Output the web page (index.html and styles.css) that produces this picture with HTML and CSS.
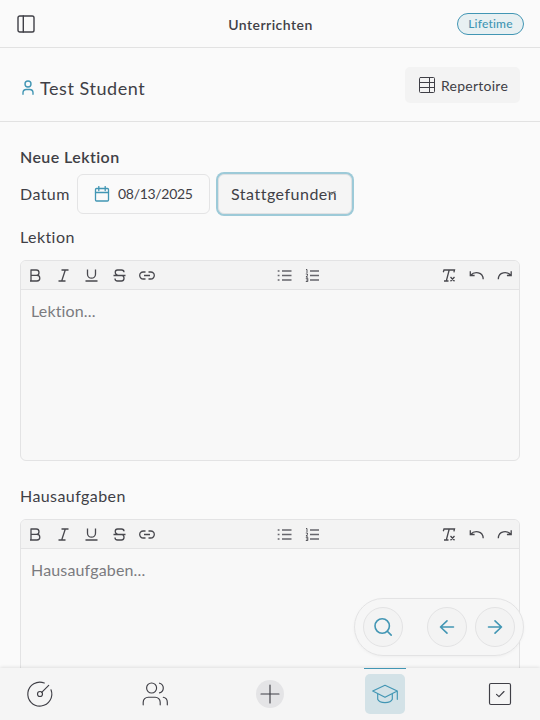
FILE: index.html
```
<!DOCTYPE html>
<html lang="de">
<head>
<meta charset="utf-8">
<title>Unterrichten</title>
<link rel="stylesheet" href="styles.css">
</head>
<body>
<svg class="sprite" aria-hidden="true">
  <symbol id="bold" viewBox="0 0 15 15"><path d="M3 2v11h6a2.8 2.8 0 0 0 0-5.6H3h5.3a2.6 2.6 0 0 0 0-5.4H2.5M2 13h2"/></symbol>
  <symbol id="italic" viewBox="0 0 15 15"><path d="M5.5 2h7M2.5 13h7M9.3 2 5.7 13"/></symbol>
  <symbol id="underline" viewBox="0 0 15 15"><path d="M3.5 1.5v4.7a4 4 0 0 0 8 0V1.5M1.5 13h12"/></symbol>
  <symbol id="strike" viewBox="0 0 15 15"><path d="M12 4.2C12 2.8 11 2 9.5 2h-4C2.5 2 2.5 6.5 5.5 7.2M1.5 7.5h12M3 10.5C3 12.2 4 13 5.5 13h4c3 0 3.5-4.5.5-5.5"/></symbol>
  <symbol id="link" viewBox="0 0 16 15"><path d="M6.5 4H4.2a3.4 3.4 0 0 0 0 7h2.3M9.5 4h2.3a3.4 3.4 0 0 1 0 7H9.5M5 7.5h6"/></symbol>
  <symbol id="bullets" viewBox="0 0 15 15"><path class="soft" d="M5 3h9.5M5 7.5h9.5M5 12h9.5M.7 3h1.8M.7 7.5h1.8M.7 12h1.8"/></symbol>
  <symbol id="numbers" viewBox="0 0 15 15"><path class="soft" d="M5 3h9M5 7.5h9M5 12h9"/><path class="fine" d="M1 1.5h1V5M.8 6h1.7v1.3L1 9h2M.8 10.3h2v3.2h-2M1.2 12h1.5"/></symbol>
  <symbol id="clear" viewBox="0 0 15 15"><path d="M2.3 4.3 3 2h10.5l-.6 2.3M8.2 2 5.3 13M3 13h4.5M9.5 9l4 4.3M13.5 9l-4 4.3"/></symbol>
  <symbol id="undo" viewBox="0 0 15 15"><path d="M1.3 3.2V7.5h4.3M1.6 7.2C5.3 3.3 14 3.5 14.2 11.3"/></symbol>
  <symbol id="redo" viewBox="0 0 15 15"><path d="M14.2 3.2V7.5H9.9M13.9 7.2C10.2 3.3 1.5 3.5 1.3 11.3"/></symbol>
</svg>

<header class="topbar">
  <svg class="icon panel" viewBox="0 0 18 18"><rect x="1" y="1" width="16" height="16" rx="1.8"/><path d="M6.3 1v16"/></svg>
  <h1 class="title">Unterrichten</h1>
  <span class="badge">Lifetime</span>
</header>

<section class="student">
  <svg class="icon person" viewBox="0 0 14 16"><circle cx="7" cy="4" r="3"/><path d="M2 14.3v-1.5a3.3 3.3 0 0 1 3.3-3.3h3.4a3.3 3.3 0 0 1 3.3 3.3v1.5"/></svg>
  <span class="name">Test Student</span>
  <button class="repertoire">
    <svg class="icon table" viewBox="0 0 16 16"><rect x=".5" y=".5" width="15" height="15" rx="1"/><path d="M.5 5.5h15M.5 10.5h15M10.5.5v15"/></svg>
    <span>Repertoire</span>
  </button>
</section>

<main class="lesson">
  <h2 class="heading">Neue Lektion</h2>
  <div class="fields">
    <span class="label datum">Datum</span>
    <button class="date">
      <svg class="icon calendar" viewBox="0 0 16 16"><rect x="1.5" y="2.5" width="13" height="12.5" rx="1"/><path d="M1.5 6.5h13M4.8.5v4M11.2.5v4"/></svg>
      <span>08/13/2025</span>
    </button>
    <div class="status"><span>Stattgefunden</span><svg class="icon chevron" viewBox="0 0 9 6"><path d="M.5.8h2L4.5 4 6.5.8h2"/></svg></div>
  </div>

  <div class="label lektion">Lektion</div>
  <div class="editor">
    <div class="toolbar">
      <div class="group"><svg><use href="#bold"/></svg><svg><use href="#italic"/></svg><svg><use href="#underline"/></svg><svg><use href="#strike"/></svg><svg class="wide"><use href="#link"/></svg></div>
      <div class="group"><svg><use href="#bullets"/></svg><svg><use href="#numbers"/></svg></div>
      <div class="group"><svg><use href="#clear"/></svg><svg><use href="#undo"/></svg><svg><use href="#redo"/></svg></div>
    </div>
    <div class="text">Lektion...</div>
  </div>

  <div class="label homework">Hausaufgaben</div>
  <div class="editor">
    <div class="toolbar">
      <div class="group"><svg><use href="#bold"/></svg><svg><use href="#italic"/></svg><svg><use href="#underline"/></svg><svg><use href="#strike"/></svg><svg class="wide"><use href="#link"/></svg></div>
      <div class="group"><svg><use href="#bullets"/></svg><svg><use href="#numbers"/></svg></div>
      <div class="group"><svg><use href="#clear"/></svg><svg><use href="#undo"/></svg><svg><use href="#redo"/></svg></div>
    </div>
    <div class="text">Hausaufgaben...</div>
  </div>
</main>

<div class="pager">
  <button class="round search"><svg class="icon" viewBox="0 0 20 20"><circle cx="9.2" cy="9" r="7.2"/><path d="m14.3 14.2 3.9 3.9"/></svg></button>
  <button class="round"><svg class="icon" viewBox="0 0 20 20"><path d="M16.5 10h-13M10 3.8 3.5 10l6.5 6.2"/></svg></button>
  <button class="round"><svg class="icon" viewBox="0 0 20 20"><path d="M3.5 10h13M10 3.8l6.5 6.2-6.5 6.2"/></svg></button>
</div>

<nav class="nav">
  <a class="item"><svg class="icon" viewBox="0 0 28 28"><path d="M18.3 3A12 12 0 1 0 25 9.8M15.7 12.3l7-7"/><circle cx="14" cy="14" r="2.5"/></svg></a>
  <a class="item"><svg class="icon" viewBox="0 0 28 28"><circle cx="10.6" cy="8" r="5"/><path d="M2.2 24.8v-2.6a5 5 0 0 1 5-5h7a5 5 0 0 1 5 5v2.6M18.5 3.2a5 5 0 0 1 0 9.7M22.3 17.3a5 5 0 0 1 4 4.9v2.6"/></svg></a>
  <a class="item"><span class="plus"><svg class="icon" viewBox="0 0 28 28"><path d="M14 5v18M5 14h18"/></svg></span></a>
  <a class="item active"><svg class="icon" viewBox="0 0 28 28"><path d="M14 5.3 26.3 11 14 17.3 1.7 11ZM6.7 14v5.3c1.7 4.4 12.9 4.4 14.6 0V14M26.3 11v8.3"/></svg></a>
  <a class="item"><svg class="icon check" viewBox="0 0 28 28"><rect x="3.5" y="3.5" width="21" height="21" rx="1.5"/><path d="m10.5 14.3 2.5 2.4 5-5.2"/></svg></a>
</nav>
</body>
</html>
```
FILE: styles.css
```
* { box-sizing: border-box; }
body {
  margin: 0;
  height: 720px;
  overflow: hidden;
  background: #fafafa;
  color: #3f3f46;
  font-family: Lato, "Open Sans", sans-serif;
  font-size: 16px;
}
button { font: inherit; color: inherit; margin: 0; padding: 0; border: 0; }
h1, h2 { margin: 0; }
.sprite { display: none; }
.icon { display: block; flex: none; fill: none; stroke: currentColor; stroke-width: 1.4; stroke-linecap: round; stroke-linejoin: round; }

.topbar { height: 48px; border-bottom: 1px solid #e2e2e2; display: grid; grid-template-columns: 1fr auto 1fr; align-items: center; padding: 0 16px 0 17px; }
.panel { width: 18px; height: 18px; }
.title { font-size: 14px; font-weight: 600; line-height: 20px; letter-spacing: .45px; padding-top: 3px; }
.badge { justify-self: end; width: 67px; height: 22px; border: 1px solid #4296b4; border-radius: 11px; background: #e8f0f2; color: #4296b4; font-size: 12px; font-weight: 500; line-height: 20px; text-align: center; letter-spacing: .2px; }

.student { height: 74px; border-bottom: 1px solid #e2e2e2; display: flex; align-items: center; padding: 0 20px 0 21px; }
.person { width: 14px; height: 16px; color: #4296b4; margin-top: 6px; }
.name { margin: 7px 0 0 5px; font-size: 18px; line-height: 24px; letter-spacing: .55px; }
.repertoire { margin: 19px 0 0 auto; width: 115px; height: 36px; border-radius: 5px; background: #f3f3f3; display: flex; align-items: center; padding: 0 0 0 14px; gap: 6px; font-size: 14px; letter-spacing: .25px; align-self: flex-start; }
.table { width: 16px; height: 16px; stroke-width: 1; }
.repertoire span { padding-top: 1px; }

.lesson { padding: 23px 20px 0; }
.heading { font-size: 16px; line-height: 24px; font-weight: 600; letter-spacing: .42px; }
.label { line-height: 24px; letter-spacing: .42px; }
.fields { display: flex; align-items: center; height: 50px; }
.datum { width: 57px; margin-top: -1px; }
.date { width: 133px; height: 40px; border: 1px solid #e4e4e5; border-radius: 6px; background: #fafafa; display: flex; align-items: center; padding-left: 16px; gap: 8px; font-size: 14px; letter-spacing: -.3px; }
.date span { margin-top: -1px; }
.calendar { width: 16px; height: 16px; color: #4296b4; stroke-width: 1.3; }
.status { margin-left: 8px; width: 134px; height: 40px; background: #f5f5f5; border: 1px solid #dfe1e3; border-radius: 6px; box-shadow: 0 0 0 2px #9dcad8; display: flex; align-items: center; padding-left: 12px; position: relative; letter-spacing: .5px; }
.status span { margin-top: -1px; }
.chevron { position: absolute; width: 9px; height: 6px; right: 15px; top: 16px; stroke-width: .9; color: #77777c; }
.lektion { margin: 6px 0 11px; }
.homework { margin: 23px 0 11px; }
.editor { height: 201px; border: 1px solid #e3e3e4; border-radius: 6px; background: #f8f8f8; overflow: hidden; }
.toolbar { height: 29px; background: #f3f3f3; border-bottom: 1px solid #e3e3e4; display: flex; justify-content: space-between; align-items: center; padding: 0 7px 0 6.5px; }
.group { display: flex; gap: 13px; align-items: center; }
.toolbar svg { width: 15px; height: 15px; fill: none; stroke: #48484e; stroke-width: 1.3; }
.toolbar svg.wide { width: 16px; margin-left: -.5px; }
.fine { stroke-width: .9; }
.soft { stroke: #66666c; stroke-width: 1.5; }
.text { padding: 9px 10px; line-height: 24px; color: #7b7b7f; letter-spacing: .15px; }

.pager { position: fixed; right: 16px; bottom: 64px; width: 170px; height: 58px; padding: 0 8px; border: 1px solid #e3e3e4; border-radius: 29px; background: #f6f6f6; box-shadow: 0 1px 3px #0000000a; display: flex; align-items: center; gap: 8px; }
.round { width: 40px; height: 40px; border: 1px solid #e3e3e4; border-radius: 50%; background: #f3f3f3; color: #4296b4; display: flex; align-items: center; justify-content: center; }
.round .icon { width: 20px; height: 20px; stroke-width: 1.6; }
.search { margin-right: 16px; }

.nav { position: fixed; left: 0; right: 0; bottom: 0; height: 52px; background: #f5f5f5; box-shadow: 0 -1px 3px #00000018; padding: 6px 20px; display: flex; justify-content: space-between; }
.item { width: 40px; height: 40px; display: flex; align-items: center; justify-content: center; border-radius: 5px; }
.item .icon { width: 28px; height: 28px; stroke-width: 1.15; }
.plus { width: 28px; height: 28px; border-radius: 50%; background: #e4e4e6; }
.active { background: #d3e2e7; color: #4296b4; position: relative; }
.active::before { content: ""; position: absolute; left: -1px; top: -6px; width: 42px; height: 1px; background: #4296b4; }
```
